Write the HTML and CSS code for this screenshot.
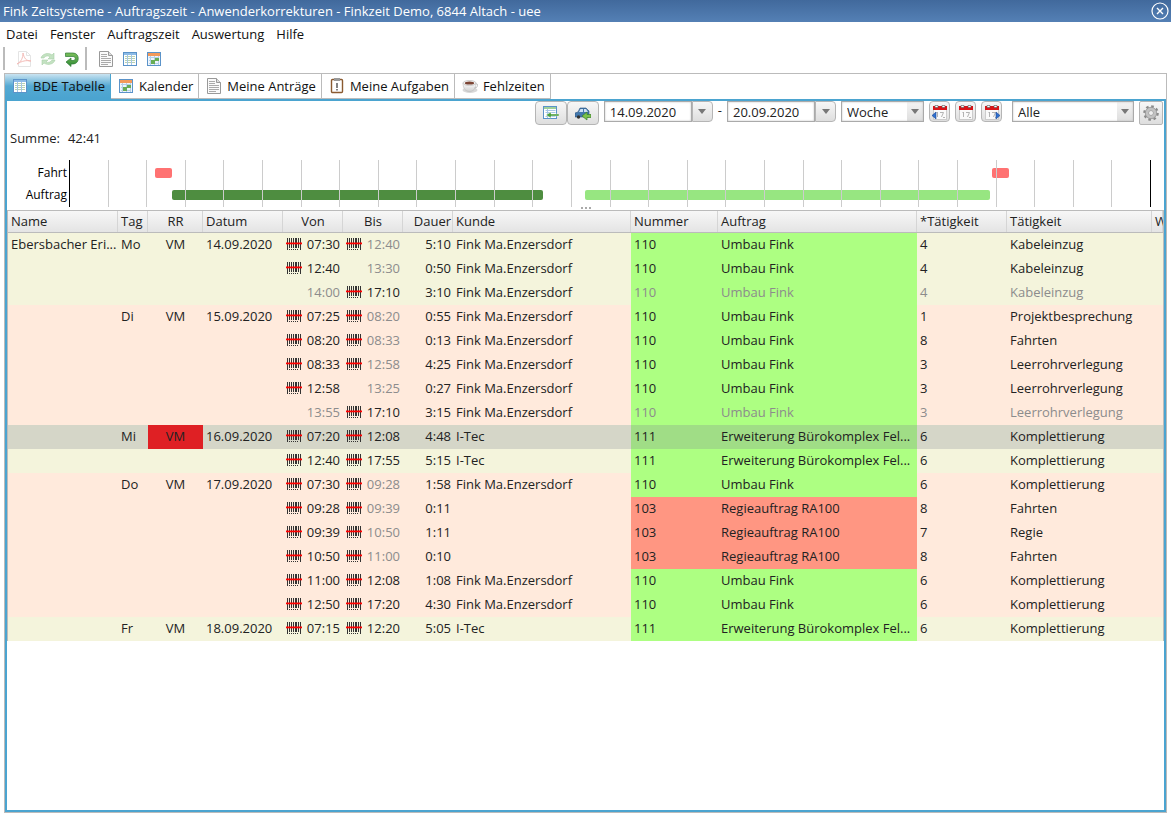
FILE: index.html
```html
<!DOCTYPE html>
<html lang="de">
<head>
    <meta charset="UTF-8">
    <meta name="viewport" content="width=device-width, initial-scale=1.0">
    <title>Fink Zeitsysteme - Auftragszeit</title>
    <link rel="stylesheet" href="styles.css">
</head>
<body>

<!-- Icons -->
<svg class="sprite" aria-hidden="true">
    <defs>
        <linearGradient id="gray" x2="0" y2="1"><stop offset="0" stop-color="#fff"/><stop offset="1" stop-color="#cfcfcf"/></linearGradient>
        <linearGradient id="green" x2="0" y2="1"><stop offset="0" stop-color="#7cbf5c"/><stop offset="1" stop-color="#2f8a35"/></linearGradient>
    </defs>
    <symbol id="i-pdf" viewBox="0 0 16 16">
        <path d="M2.500 .5h8l4 4v11h-12z" fill="#fff" stroke="#e4e4e4"/>
        <path d="M10.500 .5v4h4" fill="none" stroke="#e4e4e4"/>
        <path d="M1 13c4-2 6-6 6-11 1 5 3 8 8 8-5-1-9 0-14 3z" fill="none" stroke="#f4bcb8"/>
    </symbol>
    <symbol id="i-sync" viewBox="0 0 16 16">
        <path d="M1 7c1-4 7-6 11-3l2-2v6H8l2-2C8 4 5 5 4 7z" fill="#c4e2c2" stroke="#a9d0a8" stroke-width=".6"/>
        <path d="M15 9c-1 4-7 6-11 3l-2 2V9h6l-2 2c2 1 5 0 6-2z" fill="#c4e2c2" stroke="#a9d0a8" stroke-width=".6"/>
    </symbol>
    <symbol id="i-back" viewBox="0 0 16 16">
        <path d="M1.500 2H9c7 0 7 11 0 11H7v2.500L2 11l5-4v2.500h2c3 0 3-4 0-4H1.500z" fill="url(#green)" stroke="#2d7a33" stroke-width=".7"/>
    </symbol>
    <symbol id="i-doc" viewBox="0 0 16 16">
        <path d="M1.500 .5h9l4 4v11h-13z" fill="#fafafa" stroke="#999"/>
        <path d="M10.500 .5v4h4" fill="#ddd" stroke="#999"/>
        <path d="M3 3.500h6M3 5.500h6M3 7.500h10M3 9.500h10M3 11.500h10M3 13.500h7" stroke="#aaa"/>
    </symbol>
    <symbol id="i-table" viewBox="0 0 16 16">
        <rect x="1.500" y="1.500" width="13" height="13" fill="#fff" stroke="#5b93c9"/>
        <path d="M2 3h12" stroke="#8cbbe6" stroke-width="2"/>
        <path d="M3 5.500h10M3 7.500h10M3 9.500h10M3 11.500h10" stroke="#b9d3b0"/>
        <path d="M5.500 4v10M9.500 4v10" stroke="#a6c6e6"/>
    </symbol>
    <symbol id="i-cal" viewBox="0 0 16 16">
        <rect x="1.500" y="1.500" width="13" height="13" fill="#eef5fc" stroke="#5b93c9"/>
        <path d="M2 3.500h12" stroke="#f39a5b" stroke-width="3"/>
        <path d="M3 6.500h10M3 9.500h10M3 12.500h10M4.500 5v9M8.500 5v9M12.500 5v9" stroke="#b5cfe8"/>
        <path d="M9 7h4v3H9zM5 9h4v4H5z" fill="#68ad55"/>
    </symbol>
    <symbol id="i-task" viewBox="0 0 16 16">
        <rect x="2.500" y="1.500" width="11" height="13" rx="1" fill="#fff" stroke="#8a5a30" stroke-width="1.400"/>
        <path d="M5 0h6v3H5z" fill="#999"/>
        <path d="M8 5v5M8 11v1.500" stroke="#333" stroke-width="1.200"/>
    </symbol>
    <symbol id="i-cup" viewBox="0 0 16 16">
        <ellipse cx="8" cy="12" rx="7.500" ry="3" fill="#d8d8d8"/>
        <path d="M1 5c0 6 3 8.500 6.500 8.500S14 11 14 5z" fill="url(#gray)" stroke="#bbb" stroke-width=".6"/>
        <path d="M13.500 6c3.500-1 2.500 4-1 4" fill="none" stroke="#bbb"/>
        <ellipse cx="7.500" cy="5" rx="6.500" ry="2.500" fill="#f4f4f4" stroke="#bbb" stroke-width=".7"/>
        <ellipse cx="7.500" cy="5" rx="4.700" ry="1.600" fill="#7b4434"/>
    </symbol>
    <symbol id="i-import" viewBox="0 0 16 16">
        <rect x=".5" y="1.500" width="13" height="12" fill="#fff" stroke="#5b93c9"/>
        <path d="M1 3h12" stroke="#7fc07a" stroke-width="1.500"/>
        <path d="M2.500 5.500h10M2.500 7.500h10M2.500 11.500h10M4.500 4v9" stroke="#a6c6e6"/>
        <path d="M16 9H8V7l-5 3 5 3v-2h8z" fill="#4da03f" stroke="#fff" stroke-width=".4"/>
    </symbol>
    <symbol id="i-car" viewBox="0 0 16 16">
        <path d="M0 8l3-1 2-4h6l3 3v6H0z" fill="#4378ad" stroke="#2b527d" stroke-width=".6"/>
        <path d="M4 7l1.500-3H8v3zM9 4h2l2 3H9z" fill="#cfe2f3"/>
        <circle cx="3.500" cy="12" r="1.700" fill="#333"/>
        <path d="M7 11l5-4v2.500h4v3h-4V15z" fill="#7cc24a" stroke="#38802a" stroke-width=".7"/>
    </symbol>
    <symbol id="i-date" viewBox="0 0 16 16">
        <rect x="1.500" y="2.500" width="13" height="13" fill="#fafafa" stroke="#ccc"/>
        <path d="M1 2h14v4H1z" fill="#d91418"/>
        <path d="M3 1.500h3v2H3zM10 1.500h3v2h-3z" fill="#fff" stroke="#555" stroke-width=".6"/>
        <path d="M4.500 9l1-1v5M8 8.500h3.500L9.500 13M11 13.500h2" fill="none" stroke="#aaa" stroke-width=".9"/>
    </symbol>
    <symbol id="i-prev" viewBox="0 0 16 16"><path d="M4 8v7L0 11.500z" fill="#2f6fd0" stroke="#1d4a94" stroke-width=".6"/></symbol>
    <symbol id="i-next" viewBox="0 0 16 16"><path d="M12 8v7l4-3.500z" fill="#2f6fd0" stroke="#1d4a94" stroke-width=".6"/></symbol>
    <symbol id="i-gear" viewBox="0 0 16 16">
        <circle cx="8" cy="8" r="6.700" fill="none" stroke="#8a8a8a" stroke-width="2.200" stroke-dasharray="2.600 2.660"/>
        <circle cx="8" cy="8" r="4.200" fill="none" stroke="#c2c2c2" stroke-width="3"/>
        <circle cx="8" cy="8" r="5.700" fill="none" stroke="#8a8a8a" stroke-width=".7"/>
        <circle cx="8" cy="8" r="2.500" fill="#eee" stroke="#8a8a8a" stroke-width=".7"/>
    </symbol>
    <symbol id="i-barcode" viewBox="0 0 16 12">
        <path d="M1 0h1v12H1zM3 0h1v10H3zM5 0h1v10H5zM7 0h1v10H7zM9 0h2v10H9zM12 0h1v10h-1zM14 0h1v12h-1z" fill="#333"/>
        <path d="M3 11h1v1H3zM5 11h1v1H5zM7 11h1v1H7zM9 11h1v1H9zM11 11h1v1h-1z" fill="#333"/>
        <path d="M0 4.500h16v1.800H0z" fill="#f00"/>
    </symbol>
    <symbol id="i-close" viewBox="0 0 18 18">
        <circle cx="9" cy="9" r="8" fill="none" stroke="#fff" stroke-width="1.200"/>
        <path d="M6 6l6 6M12 6l-6 6" stroke="#fff" stroke-width="1.400"/>
    </symbol>
</svg>

<header class="titlebar">
    <h1>Fink Zeitsysteme - Auftragszeit - Anwenderkorrekturen - Finkzeit Demo, 6844 Altach - uee</h1>
    <button class="close" aria-label="Schließen"><svg><use href="#i-close"/></svg></button>
</header>

<nav class="menu">
    <a href="#">Datei</a>
    <a href="#">Fenster</a>
    <a href="#">Auftragszeit</a>
    <a href="#">Auswertung</a>
    <a href="#">Hilfe</a>
</nav>

<div class="toolbar">
    <div class="tool-group">
        <button aria-label="PDF"><svg class="icon"><use href="#i-pdf"/></svg></button>
        <button aria-label="Aktualisieren"><svg class="icon"><use href="#i-sync"/></svg></button>
        <button aria-label="Zurück"><svg class="icon"><use href="#i-back"/></svg></button>
    </div>
    <div class="tool-group">
        <button aria-label="Anträge"><svg class="icon"><use href="#i-doc"/></svg></button>
        <button aria-label="Tabelle"><svg class="icon"><use href="#i-table"/></svg></button>
        <button aria-label="Kalender"><svg class="icon"><use href="#i-cal"/></svg></button>
    </div>
</div>

<main class="window">
    <div class="tabs">
        <button class="tab active"><svg class="icon"><use href="#i-table"/></svg>BDE Tabelle</button>
        <button class="tab"><svg class="icon"><use href="#i-cal"/></svg>Kalender</button>
        <button class="tab"><svg class="icon"><use href="#i-doc"/></svg>Meine Anträge</button>
        <button class="tab"><svg class="icon"><use href="#i-task"/></svg>Meine Aufgaben</button>
        <button class="tab"><svg class="icon"><use href="#i-cup"/></svg>Fehlzeiten</button>
    </div>

    <div class="panel">
        <form class="filters">
            <div class="pair">
                <button type="button" class="btn" aria-label="Buchung übernehmen"><svg class="icon"><use href="#i-import"/></svg></button>
                <button type="button" class="btn" aria-label="Fahrt übernehmen"><svg class="icon"><use href="#i-car"/></svg></button>
            </div>
            <div class="date">
                <input type="text" value="14.09.2020" aria-label="Von">
                <button type="button" class="drop" aria-label="Datum wählen"></button>
            </div>
            <span class="dash">-</span>
            <div class="date">
                <input type="text" value="20.09.2020" aria-label="Bis">
                <button type="button" class="drop" aria-label="Datum wählen"></button>
            </div>
            <div class="select period">
                <select aria-label="Zeitraum"><option>Woche</option></select>
            </div>
            <button type="button" class="btn small" aria-label="Vorige Woche"><svg class="icon"><use href="#i-date"/><use href="#i-prev"/></svg></button>
            <button type="button" class="btn small" aria-label="Aktuelle Woche"><svg class="icon"><use href="#i-date"/></svg></button>
            <button type="button" class="btn small" aria-label="Nächste Woche"><svg class="icon"><use href="#i-date"/><use href="#i-next"/></svg></button>
            <div class="select scope">
                <select aria-label="Auswahl"><option>Alle</option></select>
            </div>
            <button type="button" class="btn gear" aria-label="Einstellungen"><svg class="icon"><use href="#i-gear"/></svg></button>
        </form>

        <p class="sum">Summe: <span>42:41</span></p>

        <div class="timeline">
            <div class="labels">
                <span>Fahrt</span>
                <span>Auftrag</span>
            </div>
            <div class="track" id="track"></div>
        </div>
        <div class="grip"><i></i><i></i><i></i></div>

        <table class="bookings">
            <colgroup>
                <col class="c-name"><col class="c-day"><col class="c-rr"><col class="c-date">
                <col class="c-time"><col class="c-time"><col class="c-dur"><col class="c-cust">
                <col class="c-no"><col class="c-order"><col class="c-actno"><col class="c-act"><col>
            </colgroup>
            <thead>
                <tr>
                    <th>Name</th><th>Tag</th><th class="center">RR</th><th>Datum</th>
                    <th class="center">Von</th><th class="center">Bis</th><th class="right">Dauer</th><th>Kunde</th>
                    <th>Nummer</th><th>Auftrag</th><th>*Tätigkeit</th><th>Tätigkeit</th><th>W</th>
                </tr>
            </thead>
            <tbody id="rows"></tbody>
        </table>
    </div>
</main>

<script src="script.js"></script>
</body>
</html>
```

FILE: styles.css
```css
* {
    box-sizing: border-box;
}
body {
    font-family: "Open Sans", "Noto Sans", sans-serif;
    font-size: 13px;
    line-height: 18px;
    color: #222;
    background-color: #fff;
    margin: 0;
    height: 100vh;
    display: flex;
    flex-direction: column;
}
button, input, select {
    font: inherit;
    color: inherit;
    margin: 0;
}
button {
    display: flex;
    align-items: center;
    justify-content: center;
    border: none;
    background: none;
    padding: 0;
    cursor: pointer;
}
.sprite {
    position: absolute;
    width: 0;
    height: 0;
}
.icon {
    width: 16px;
    height: 16px;
    flex: none;
}

/* Title bar */
.titlebar {
    display: flex;
    align-items: center;
    justify-content: space-between;
    height: 22px;
    padding: 0 2px 0 3px;
    background: linear-gradient(#41699c, #5480b5);
    color: #fff;
}
.titlebar h1 {
    margin: 0;
    font-size: 13px;
    font-weight: normal;
}
.close svg {
    width: 18px;
    height: 18px;
}

/* Menu and toolbar */
.menu {
    display: flex;
    gap: 12px;
    padding: 3px 6px;
}
.menu a {
    color: #111;
    text-decoration: none;
}
.toolbar {
    display: flex;
    gap: 3px;
    height: 27px;
    padding: 1px 3px 3px;
}
.tool-group {
    display: flex;
    gap: 8px;
    align-items: center;
    padding: 0 2px 0 11px;
    border-left: 2px solid #bbb;
}

/* Tabs */
.window {
    flex: 1;
    display: flex;
    flex-direction: column;
    margin: 0 4px 5px;
    border: 1px solid #bbb;
}
.tabs {
    display: flex;
    height: 25px;
}
.tab {
    gap: 5px;
    padding: 0 5px 0 7px;
    color: #111;
    border-right: 1px solid #bbb;
    border-bottom: 1px solid #bbb;
}
.tab.active {
    background: linear-gradient(#c9e3f1, #55a9d3 50%, #4ba4d0);
    border-color: #4ba4d0;
}

/* Panel */
.panel {
    flex: 1;
    border: 2px solid #4ba4d0;
    overflow: hidden;
}
.filters {
    display: flex;
    justify-content: flex-end;
    align-items: flex-start;
    gap: 5px;
    padding-right: 1px;
}
.pair, .date {
    display: flex;
}
.btn {
    width: 32px;
    height: 24px;
    border: 1px solid #b5b5b5;
    border-radius: 4px;
    background: linear-gradient(#f7f7f7, #dedede);
}
.btn.small {
    width: 21px;
    height: 21px;
}
.btn.gear {
    width: 24px;
    border-radius: 2px;
}
.date input {
    width: 88px;
    height: 21px;
    padding: 0 5px;
    border: 1px solid #aaa;
    background-color: #fff;
    box-shadow: inset 0 0 2px #bbb;
}
.drop {
    width: 21px;
    height: 21px;
    border: 1px solid #b5b5b5;
    border-radius: 0 4px 4px 0;
    background: linear-gradient(#f7f7f7, #dedede);
}
.drop::before, .select::after {
    content: "";
    border: 4px solid transparent;
    border-top: 5px solid #777;
    border-bottom: none;
}
.select {
    display: flex;
    align-items: center;
    height: 21px;
    position: relative;
}
.select select {
    appearance: none;
    width: 100%;
    height: 21px;
    padding: 0 20px 0 5px;
    border: 1px solid #aaa;
    border-radius: 0;
    background: linear-gradient(#f4f4f4, #dedede) right / 16px no-repeat #fff;
    box-shadow: inset 0 0 2px #bbb;
}
.select::after {
    position: absolute;
    right: 5px;
    pointer-events: none;
}
.period {
    width: 83px;
}
.scope {
    width: 122px;
    margin-left: 5px;
}
.sum {
    display: flex;
    gap: 8px;
    margin: 4px 3px 13px;
}

/* Timeline */
.timeline {
    display: flex;
    padding-right: 13px;
    color: #000;
    font-size: 12px;
}
.labels {
    display: flex;
    flex-direction: column;
    gap: 4px;
    width: 62px;
    padding: 4px 2px 0 0;
    text-align: right;
}
.track {
    flex: 1;
    position: relative;
    display: flex;
    height: 47px;
    border-left: 1px solid #000;
    border-right: 1px solid #000;
}
.tick {
    flex: 1;
    position: relative;
    z-index: 1;
    border-right: 1px solid #ccc;
}
.tick:last-of-type {
    border-right: none;
}
.bar {
    position: absolute;
    height: 10px;
    border-radius: 2px;
}
.bar.drive {
    top: 8px;
    background-color: #ff7272;
}
.bar.order {
    top: 30px;
    background-color: #4e8d40;
}
.bar.order.light {
    background-color: #97e681;
}
.grip {
    display: flex;
    justify-content: center;
    gap: 2px;
    height: 3px;
}
.grip i {
    width: 2px;
    height: 2px;
    background-color: #aaa;
}

/* Table */
.bookings {
    width: 100%;
    table-layout: fixed;
    border-collapse: separate;
    border-spacing: 0;
    border: 1px solid #bbb;
    border-width: 0 1px;
}
.c-name { width: 110px; }
.c-day { width: 30px; }
.c-rr { width: 55px; }
.c-date { width: 80px; }
.c-time { width: 60px; }
.c-dur { width: 50px; }
.c-cust { width: 178px; }
.c-no { width: 87px; }
.c-order { width: 199px; }
.c-actno { width: 90px; }
.c-act { width: 145px; }
.bookings th, .bookings td {
    height: 24px;
    padding: 0 3px 2px;
    overflow: hidden;
    white-space: nowrap;
    text-align: left;
    font-weight: normal;
}
.bookings th {
    height: 23px;
    padding-bottom: 1px;
    border: solid #bbb;
    border-width: 1px 0;
    background: linear-gradient(#f7f7f7, #e4e4e4);
    box-shadow: inset -1px 0 #d5d5d5;
}
.bookings .center {
    text-align: center;
}
.bookings .right {
    text-align: right;
    padding-right: 2px;
}
.even {
    background-color: #f4f4dc;
}
.odd {
    background-color: #ffeadc;
}
.green {
    background-color: #adff82;
}
.red {
    background-color: #ff9682;
}
.selected {
    background-color: #d5d6c8;
}
.selected .green {
    background-color: #a0dd86;
}
.alert {
    background-color: #df2024;
}
.muted {
    color: #8c8c8c;
}
.stamp {
    display: flex;
    align-items: center;
    justify-content: flex-end;
}
.stamp svg {
    width: 16px;
    height: 12px;
    margin-right: auto;
}
```

FILE: script.js
```javascript
// type, left %, width %
const bars = [
    ['drive', 7.87, 1.57],
    ['order', 9.44, 34.4],
    ['order light', 47.7, 37.5],
    ['drive', 85.4, 1.57]
];

// row colour, name, day, date, from, to, duration, customer, order no, order, activity no, activity
// "|" = barcode in front of the time, "~" = greyed out
const FINK = 'Fink Ma.Enzersdorf';
const BUERO = 'Erweiterung Bürokomplex Fel...';
const rows = [
    ['even', 'Ebersbacher Eri...', 'Mo', '14.09.2020', '|07:30', '|~12:40', '5:10', FINK, '110', 'Umbau Fink', '4', 'Kabeleinzug'],
    ['even', '', '', '', '|12:40', '~13:30', '0:50', FINK, '110', 'Umbau Fink', '4', 'Kabeleinzug'],
    ['even', '', '', '', '~14:00', '|17:10', '3:10', FINK, '~110', '~Umbau Fink', '~4', '~Kabeleinzug'],
    ['odd', '', 'Di', '15.09.2020', '|07:25', '|~08:20', '0:55', FINK, '110', 'Umbau Fink', '1', 'Projektbesprechung'],
    ['odd', '', '', '', '|08:20', '|~08:33', '0:13', FINK, '110', 'Umbau Fink', '8', 'Fahrten'],
    ['odd', '', '', '', '|08:33', '|~12:58', '4:25', FINK, '110', 'Umbau Fink', '3', 'Leerrohrverlegung'],
    ['odd', '', '', '', '|12:58', '~13:25', '0:27', FINK, '110', 'Umbau Fink', '3', 'Leerrohrverlegung'],
    ['odd', '', '', '', '~13:55', '|17:10', '3:15', FINK, '~110', '~Umbau Fink', '~3', '~Leerrohrverlegung'],
    ['selected', '', 'Mi', '16.09.2020', '|07:20', '|12:08', '4:48', 'I-Tec', '111', BUERO, '6', 'Komplettierung'],
    ['even', '', '', '', '|12:40', '|17:55', '5:15', 'I-Tec', '111', BUERO, '6', 'Komplettierung'],
    ['odd', '', 'Do', '17.09.2020', '|07:30', '|~09:28', '1:58', FINK, '110', 'Umbau Fink', '6', 'Komplettierung'],
    ['odd', '', '', '', '|09:28', '|~09:39', '0:11', '', '103', 'Regieauftrag RA100', '8', 'Fahrten'],
    ['odd', '', '', '', '|09:39', '|~10:50', '1:11', '', '103', 'Regieauftrag RA100', '7', 'Regie'],
    ['odd', '', '', '', '|10:50', '|~11:00', '0:10', '', '103', 'Regieauftrag RA100', '8', 'Fahrten'],
    ['odd', '', '', '', '|11:00', '|12:08', '1:08', FINK, '110', 'Umbau Fink', '6', 'Komplettierung'],
    ['odd', '', '', '', '|12:50', '|17:20', '4:30', FINK, '110', 'Umbau Fink', '6', 'Komplettierung'],
    ['even', '', 'Fr', '18.09.2020', '|07:15', '|12:20', '5:05', 'I-Tec', '111', BUERO, '6', 'Komplettierung']
];

function cell(text, cls = '') {
    if (text.startsWith('~')) {
        text = text.slice(1);
        cls += ' muted';
    }
    return `<td class="${cls}">${text}</td>`;
}

function stamp(text) {
    const icon = text.startsWith('|') ? '<svg><use href="#i-barcode"/></svg>' : '';
    const muted = text.includes('~') ? 'muted' : '';
    return `<td><div class="stamp">${icon}<span class="${muted}">${text.replace(/[|~]/g, '')}</span></div></td>`;
}

document.getElementById('rows').innerHTML = rows.map(r => {
    const [cls, name, day, date, from, to, duration, customer, no, order, actNo, act] = r;
    const color = no.includes('103') ? 'red' : 'green';
    const rr = cls === 'selected' ? 'center alert' : 'center';
    return `<tr class="${cls}">` + cell(name) + cell(day) + cell(day ? 'VM' : '', rr) + cell(date) +
        stamp(from) + stamp(to) + cell(duration, 'right') + cell(customer) +
        cell(no, color) + cell(order, color) + cell(actNo) + cell(act) + cell('') + '</tr>';
}).join('');

document.getElementById('track').innerHTML =
    bars.map(([cls, left, width]) => `<span class="bar ${cls}" style="left: ${left}%; width: ${width}%"></span>`).join('') +
    '<div class="tick"></div>'.repeat(28);
```
